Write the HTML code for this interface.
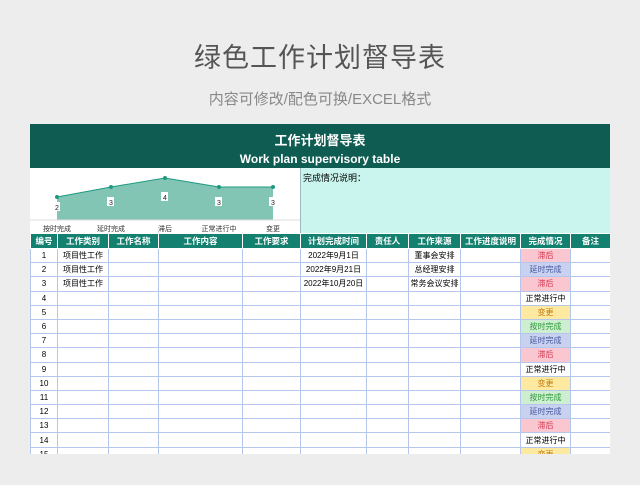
<!DOCTYPE html><html><head><meta charset="utf-8"><style>
body{margin:0;width:640px;height:485px;background:#ededed;font-family:"Liberation Sans","Noto Sans CJK SC",sans-serif;position:relative;overflow:hidden}
.t1{position:absolute;top:36px;left:0;width:640px;text-align:center;font-size:27px;color:#555;letter-spacing:1px}
.t2{position:absolute;top:88px;left:0;width:640px;text-align:center;font-size:15px;color:#888}
.wrap{position:absolute;left:30px;top:124px;width:580px;height:330px;overflow:hidden;background:#fff}
.hd{height:44px;background:#0e5c52;color:#fff;text-align:center;font-weight:bold}
.hd div:first-child{font-size:13px;padding-top:6px}
.hd div:last-child{font-size:12px;margin-top:3px}
.note{position:absolute;left:270px;top:44px;width:310px;height:65px;background:#c9f5ee;border-left:1px solid #9bb;font-size:9px;padding:3px 2px;box-sizing:border-box}
table{position:absolute;top:109px;left:0;border-collapse:collapse;table-layout:fixed;width:580px;font-size:8px}
td,th{border:1px solid #b4c6ec;height:13.2px;padding:0;text-align:center;white-space:nowrap;overflow:hidden}
th{background:#148070;color:#fff;border-color:#fff;height:14px;font-size:8.5px}
.r{background:#fac6cf;color:#d0304a}.b{background:#c8d1ef;color:#4a5aa0}.y{background:#fde9a0;color:#c07b10}.g{background:#cdeed0;color:#2f9a3a}
</style></head><body>
<div class="t1">绿色工作计划督导表</div>
<div class="t2">内容可修改/配色可换/EXCEL格式</div>
<div class="wrap">
<div class="hd"><div>工作计划督导表</div><div>Work plan supervisory table</div></div>
<svg style="position:absolute;left:0;top:44px" width="270" height="65">
<polygon points="27,29 81,19 135,10 189,19 243,19 243,52 27,52" fill="#82c5b5"/>
<polyline points="27,29 81,19 135,10 189,19 243,19" fill="none" stroke="#1d9a80" stroke-width="1"/>
<g fill="#1d9a80"><circle cx="27" cy="29" r="2"/><circle cx="81" cy="19" r="2"/><circle cx="135" cy="10" r="2"/><circle cx="189" cy="19" r="2"/><circle cx="243" cy="19" r="2"/></g>
<g font-size="7" text-anchor="middle" fill="#222"><rect x="23" y="34" width="7" height="9" fill="#fff"/><text x="27" y="42">2</text><rect x="77" y="29" width="7" height="9" fill="#fff"/><text x="81" y="37">3</text><rect x="131" y="24" width="7" height="9" fill="#fff"/><text x="135" y="32">4</text><rect x="185" y="29" width="7" height="9" fill="#fff"/><text x="189" y="37">3</text><rect x="239" y="29" width="7" height="9" fill="#fff"/><text x="243" y="37">3</text></g>
<line x1="0" y1="52" x2="270" y2="52" stroke="#ddd"/>
<g font-size="7" text-anchor="middle" fill="#333"><text x="27" y="63">按时完成</text><text x="81" y="63">延时完成</text><text x="135" y="63">滞后</text><text x="189" y="63">正常进行中</text><text x="243" y="63">变更</text></g>
</svg>
<div class="note">完成情况说明：</div>
<table>
<colgroup><col style="width:27px"><col style="width:51px"><col style="width:50px"><col style="width:84px"><col style="width:58px"><col style="width:66px"><col style="width:42px"><col style="width:52px"><col style="width:60px"><col style="width:50px"><col style="width:40px"></colgroup>
<tr><th>编号</th><th>工作类别</th><th>工作名称</th><th>工作内容</th><th>工作要求</th><th>计划完成时间</th><th>责任人</th><th>工作来源</th><th>工作进度说明</th><th>完成情况</th><th>备注</th></tr>
<tr><td>1</td><td>项目性工作</td><td></td><td></td><td></td><td>2022年9月1日</td><td></td><td>董事会安排</td><td></td><td class="r">滞后</td><td></td></tr>
<tr><td>2</td><td>项目性工作</td><td></td><td></td><td></td><td>2022年9月21日</td><td></td><td>总经理安排</td><td></td><td class="b">延时完成</td><td></td></tr>
<tr><td>3</td><td>项目性工作</td><td></td><td></td><td></td><td>2022年10月20日</td><td></td><td>常务会议安排</td><td></td><td class="r">滞后</td><td></td></tr>
<tr><td>4</td><td></td><td></td><td></td><td></td><td></td><td></td><td></td><td></td><td>正常进行中</td><td></td></tr>
<tr><td>5</td><td></td><td></td><td></td><td></td><td></td><td></td><td></td><td></td><td class="y">变更</td><td></td></tr>
<tr><td>6</td><td></td><td></td><td></td><td></td><td></td><td></td><td></td><td></td><td class="g">按时完成</td><td></td></tr>
<tr><td>7</td><td></td><td></td><td></td><td></td><td></td><td></td><td></td><td></td><td class="b">延时完成</td><td></td></tr>
<tr><td>8</td><td></td><td></td><td></td><td></td><td></td><td></td><td></td><td></td><td class="r">滞后</td><td></td></tr>
<tr><td>9</td><td></td><td></td><td></td><td></td><td></td><td></td><td></td><td></td><td>正常进行中</td><td></td></tr>
<tr><td>10</td><td></td><td></td><td></td><td></td><td></td><td></td><td></td><td></td><td class="y">变更</td><td></td></tr>
<tr><td>11</td><td></td><td></td><td></td><td></td><td></td><td></td><td></td><td></td><td class="g">按时完成</td><td></td></tr>
<tr><td>12</td><td></td><td></td><td></td><td></td><td></td><td></td><td></td><td></td><td class="b">延时完成</td><td></td></tr>
<tr><td>13</td><td></td><td></td><td></td><td></td><td></td><td></td><td></td><td></td><td class="r">滞后</td><td></td></tr>
<tr><td>14</td><td></td><td></td><td></td><td></td><td></td><td></td><td></td><td></td><td>正常进行中</td><td></td></tr>
<tr><td>15</td><td></td><td></td><td></td><td></td><td></td><td></td><td></td><td></td><td class="y">变更</td><td></td></tr>
</table>
</div>
</body></html>
